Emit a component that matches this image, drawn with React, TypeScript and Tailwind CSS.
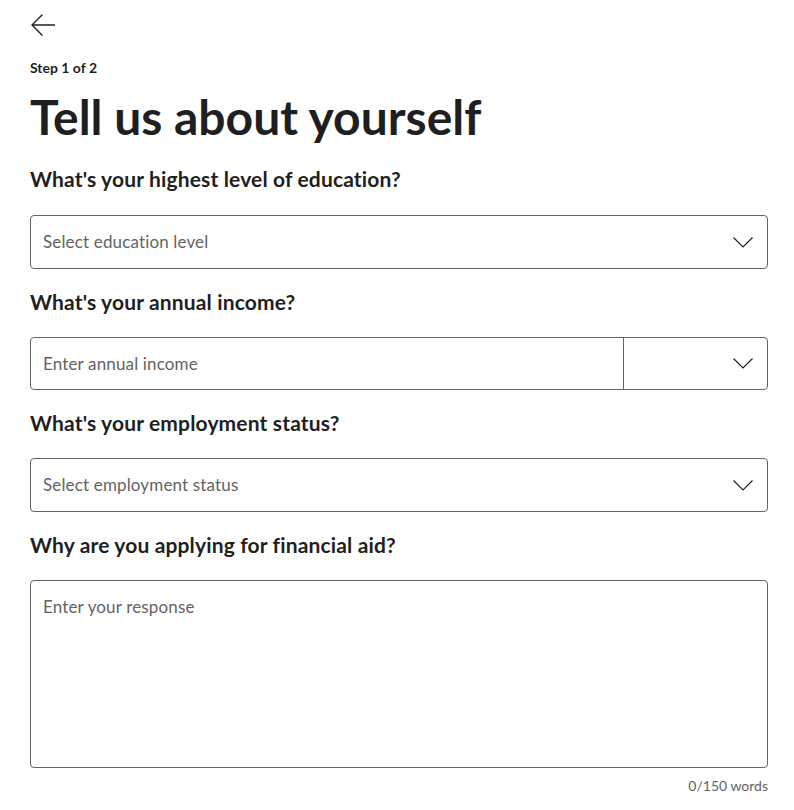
import React from "react";

const font = { fontFamily: "Lato, 'Noto Sans', sans-serif" };

function Chevron() {
  return (
    <svg width="20" height="11" viewBox="0 0 20 11" fill="none" className="block">
      <path d="M0.5 0.5 L10 10 L19.5 0.5" stroke="#1f1f1f" strokeWidth="1.2" />
    </svg>
  );
}

function Label({ children }: { children: React.ReactNode }) {
  return (
    <div className="text-[21px] leading-[26px] font-bold tracking-[0.15px] text-[#1f1f1f]">{children}</div>
  );
}

function SelectBox({ placeholder }: { placeholder: string }) {
  return (
    <div className="h-[54px] border border-[#636363] rounded-[4px] flex items-center justify-between pl-[12px] pr-[14px]">
      <span className="text-[17px] leading-[20px] tracking-[0.15px] text-[#636363]">{placeholder}</span>
      <Chevron />
    </div>
  );
}

export default function App() {
  return (
    <div className="bg-white w-[794px] h-[810px] pl-[30px] pr-[26px] text-[#1f1f1f]" style={font}>
      <div className="pt-[14px]">
        <svg width="24" height="22" viewBox="0 0 24 22" fill="none" className="block ml-[1px]">
          <path d="M24 11 H1.5 M11.5 0.5 L1 11 L11.5 21.5" stroke="#1f1f1f" strokeWidth="1.4" />
        </svg>
      </div>
      <div className="mt-[22px] text-[14px] leading-[20px] font-bold">Step 1 of 2</div>
      <h1 className="mt-[9px] text-[48px] leading-[60px] font-bold">Tell us about yourself</h1>
      <div className="mt-[19px]">
        <Label>What's your highest level of education?</Label>
      </div>
      <div className="mt-[23px]">
        <SelectBox placeholder="Select education level" />
      </div>
      <div className="mt-[20px]">
        <Label>What's your annual income?</Label>
      </div>
      <div className="mt-[22px] h-[53px] border border-[#636363] rounded-[4px] flex">
        <div className="flex-1 flex items-center pl-[12px] border-r border-[#636363]">
          <span className="text-[17px] leading-[20px] tracking-[0.15px] text-[#636363]">Enter annual income</span>
        </div>
        <div className="w-[143px] flex items-center justify-end pr-[14px]">
          <Chevron />
        </div>
      </div>
      <div className="mt-[20px]">
        <Label>What's your employment status?</Label>
      </div>
      <div className="mt-[22px]">
        <SelectBox placeholder="Select employment status" />
      </div>
      <div className="mt-[20px]">
        <Label>Why are you applying for financial aid?</Label>
      </div>
      <div className="mt-[22px] h-[188px] border border-[#636363] rounded-[4px] pl-[12px] pt-[16px]">
        <div className="text-[17px] leading-[20px] tracking-[0.15px] text-[#636363]">Enter your response</div>
      </div>
      <div className="mt-[8px] text-right text-[14px] leading-[20px] text-[#636363]">0/150 words</div>
    </div>
  );
}
